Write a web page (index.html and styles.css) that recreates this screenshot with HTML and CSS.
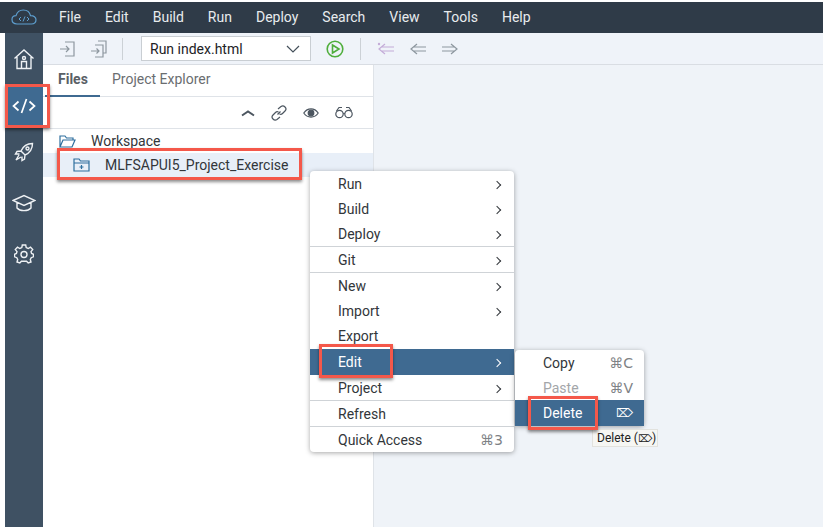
FILE: index.html
```html
<!DOCTYPE html>
<html>

<head>
  <meta charset="utf-8">
  <title>SAP Web IDE</title>
  <link rel="stylesheet" href="styles.css">
</head>

<body>
  <header class="topbar">
    <svg class="logo" width="26" height="16" viewBox="0 0 26 16">
      <path d="M6 15C2.800 15 1 13 1 10.600 1 8.300 2.800 6.700 5 6.700 6 3.200 9 1 12.300 1 16 1 18.800 3.500 19.500 6.600 22.800 6.500 25 8.300 25 10.800 25 13.400 23 15 20.300 15Z" />
      <path class="thin" d="M10 8L8 10L10 12M16 8L18 10L16 12M14 7.500L12 12.500" />
    </svg>
    <nav class="menubar">
      <span>File</span>
      <span>Edit</span>
      <span>Build</span>
      <span>Run</span>
      <span>Deploy</span>
      <span>Search</span>
      <span>View</span>
      <span>Tools</span>
      <span>Help</span>
    </nav>
  </header>

  <div class="workbench">
    <aside class="sidebar">
      <div class="side-item home">
        <svg width="22" height="22" viewBox="0 0 22 22">
          <path d="M1.500 10.500L11 2L20.500 10.500M4 9V20.500H18V9M8.500 20.500V13.500H13.500V20.500" />
          <circle cx="11" cy="10" r="1.500" />
        </svg>
      </div>
      <div class="side-item code">
        <svg width="24" height="16" viewBox="0 0 24 16">
          <path d="M6.500 3.500L1.500 8L6.500 12.500M17.500 3.500L22.500 8L17.500 12.500M14.500 1L9.500 15" />
        </svg>
      </div>
      <div class="side-item rocket">
        <svg width="20" height="20" viewBox="0 0 20 20">
          <path d="M7 9C9 4.500 13 1.500 18.500 1.500 18.500 7 15.500 11 11 13L7 9ZM7 9L3 9.500 1.500 12 5.500 12M11 13L10.500 17 8 18.500 8 14.500M5 13L2 18 7 15" />
          <circle cx="13.500" cy="6.500" r="1.500" />
        </svg>
      </div>
      <div class="side-item grad">
        <svg width="24" height="18" viewBox="0 0 24 18">
          <path d="M1 6.500L12 1.500L23 6.500L12 11.500ZM5 8.500V14C8 17.500 16 17.500 19 14V8.500" />
        </svg>
      </div>
      <div class="side-item gear">
        <svg width="20" height="20" viewBox="0 0 20 20">
          <path d="M8.300 1H11.700L12.200 3.600 14.200 4.500 16.500 3.100 18.700 5.600 17 7.600 17.600 9.500 19.500 10.400V12.800L17.200 13.700 16.300 15.500 17 18 14.200 19 12.600 17.200H7.400L5.800 19 3 18 3.700 15.500 2.800 13.700 0.500 12.800V10.400L2.400 9.500 3 7.600 1.300 5.600 3.500 3.100 5.800 4.500 7.800 3.600Z" />
          <circle cx="10" cy="10.500" r="3" />
        </svg>
      </div>
    </aside>

    <div class="content">
      <div class="toolbar">
        <svg class="tool first" width="18" height="18" viewBox="0 0 18 18">
          <path d="M6 2H15V16H6M1 9H10M7 6L10 9L7 12" />
        </svg>
        <svg class="tool" width="18" height="18" viewBox="0 0 18 18">
          <path d="M8 1H16V13H13M5 5H13V17H5M1 11H9M6.500 8.500L9 11L6.500 13.500" />
        </svg>
        <i class="tool-sep"></i>
        <div class="run-select">
          <span>Run index.html</span>
          <svg width="14" height="8" viewBox="0 0 14 8">
            <path d="M1 1L7 7L13 1" />
          </svg>
        </div>
        <svg class="play" width="18" height="18" viewBox="0 0 18 18">
          <circle cx="9" cy="9" r="7.800" />
          <path d="M6.500 5L13 9L6.500 13Z" />
        </svg>
        <i class="tool-sep second"></i>
        <svg class="tool nav purple" width="18" height="14" viewBox="0 0 18 14">
          <path d="M8 2L2 7L8 12M5 5H17M5 9H17" />
          <circle cx="2" cy="2" r="1.200" />
        </svg>
        <svg class="tool nav" width="18" height="14" viewBox="0 0 18 14">
          <path d="M8 2L2 7L8 12M5 5H17M5 9H17" />
        </svg>
        <svg class="tool nav" width="18" height="14" viewBox="0 0 18 14">
          <path d="M10 2L16 7L10 12M13 5H1M13 9H1" />
        </svg>
      </div>

      <div class="panes">
        <section class="files">
          <div class="tabs">
            <span class="tab active">Files</span>
            <span class="tab second">Project Explorer</span>
          </div>
          <div class="tree-tools">
            <svg width="14" height="8" viewBox="0 0 14 8">
              <path class="heavy" d="M1 6.500L7 2.500L13 6.500" />
            </svg>
            <svg width="16" height="16" viewBox="0 0 16 16">
              <path d="M6.500 9.500L9.500 6.500M7 4L10 1.500C11.500 0.500 13 1 14 2S15.500 4.500 14 6L11.500 8.500C10.500 9.500 9.500 9.500 8.500 9M9 12L6 14.500C4.500 15.500 3 15 2 14S0.500 11.500 2 10L4.500 7.500C5.500 6.500 6.500 6.500 7.500 7" />
            </svg>
            <svg width="16" height="12" viewBox="0 0 16 12">
              <path d="M0.800 6C4.500 0.500 11.500 0.500 15.200 6 11.500 11.500 4.500 11.500 0.800 6Z" />
              <circle class="solid" cx="8" cy="6" r="2.800" />
            </svg>
            <svg width="18" height="13" viewBox="0 0 18 13">
              <circle cx="4.500" cy="8" r="3.700" />
              <circle cx="13.500" cy="8" r="3.700" />
              <path d="M8.200 7.500H9.800M1.500 5L4 1.500H7M16.500 5L14 1.500H11" />
            </svg>
          </div>
          <div class="tree">
            <div class="tree-row root">
              <svg width="17" height="13" viewBox="0 0 17 13">
                <path d="M1 12V1H6L7.500 3H14V5M1 12H13L16 5H4L1 12Z" />
              </svg>
              <span>Workspace</span>
            </div>
            <div class="tree-row project">
              <svg width="17" height="14" viewBox="0 0 17 14">
                <path d="M1 13V1H6L7.500 3H16V13ZM1 5H16M8.500 7V11M6.500 9H10.500" />
              </svg>
              <span>MLFSAPUI5_Project_Exercise</span>
            </div>
          </div>
        </section>
        <section class="editor"></section>
      </div>
    </div>
  </div>

  <ul class="menu context">
    <li>Run<b></b></li>
    <li>Build<b></b></li>
    <li class="last">Deploy<b></b></li>
    <li class="last">Git<b></b></li>
    <li>New<b></b></li>
    <li>Import<b></b></li>
    <li class="tall">Export</li>
    <li class="selected tall">Edit<b></b></li>
    <li class="last">Project<b></b></li>
    <li class="last">Refresh</li>
    <li>Quick Access<kbd>⌘3</kbd></li>
  </ul>

  <ul class="menu submenu">
    <li>Copy<kbd>⌘C</kbd></li>
    <li class="disabled">Paste<kbd>⌘V</kbd></li>
    <li class="selected">Delete<kbd class="del">⌦</kbd></li>
  </ul>

  <div class="tooltip">Delete (<span class="del">⌦</span>)</div>

  <i class="callout box-code"></i>
  <i class="callout box-project"></i>
  <i class="callout box-edit"></i>
  <i class="callout box-delete"></i>
</body>

</html>
```

FILE: styles.css
```css
* {
  box-sizing: border-box;
}

body {
  margin: 0;
  width: 823px;
  height: 527px;
  padding: 2px 0 0 5px;
  overflow: hidden;
  background-color: #fff;
  font-family: Roboto, "DejaVu Sans", sans-serif;
  font-size: 14px;
  color: #32363a;
}

svg {
  display: block;
  flex: none;
  fill: none;
  stroke: currentColor;
  stroke-width: 1.2;
}

.topbar {
  display: flex;
  align-items: center;
  height: 31px;
  margin-left: -5px;
  padding-left: 11px;
  padding-bottom: 1px;
  background-color: #2f3b48;
  color: #e8ebee;
}

.logo {
  color: #5e9fcf;
  margin-right: 22px;
}

.logo .thin {
  stroke-width: 1;
}

.menubar {
  display: flex;
  gap: 24px;
}

.workbench {
  display: flex;
  height: 494px;
}

.sidebar {
  display: flex;
  flex-direction: column;
  width: 38px;
  background-color: #3f5163;
  color: #eef1f4;
}

.sidebar svg {
  stroke-width: 1.400;
}

.side-item {
  display: flex;
  align-items: center;
  justify-content: center;
}

.side-item.home {
  height: 50px;
  margin-bottom: 2px;
  padding-top: 1px;
}

.side-item.code {
  height: 42px;
  background-color: #3f6a91;
  color: #fff;
}

.side-item.code svg {
  stroke-width: 1.700;
}

.side-item.rocket {
  height: 50px;
}

.side-item.grad {
  height: 52px;
}

.side-item.gear {
  height: 50px;
}

.content {
  display: flex;
  flex-direction: column;
  flex: 1;
}

.toolbar {
  display: flex;
  align-items: center;
  height: 32px;
  background-color: #eff3f9;
  border-bottom: 1px solid #d9dde3;
  color: #8d979f;
}

.tool.first {
  margin-left: 16px;
}

.tool {
  margin-right: 13px;
}

.tool-sep {
  width: 1px;
  height: 22px;
  margin: 0 18px 0 1px;
  background-color: #ccd1d6;
}

.tool-sep.second {
  margin: 0 16px 0 16px;
}

.run-select {
  display: flex;
  align-items: center;
  justify-content: space-between;
  width: 170px;
  height: 25px;
  margin-right: 15px;
  padding: 0 10px 0 8px;
  background-color: #fff;
  border: 1px solid #c9ced3;
  color: #1d2226;
}

.run-select svg {
  color: #44505a;
}

.play {
  color: #4fae3c;
  stroke-width: 1.600;
}

.tool.nav {
  margin-right: 14px;
}

.tool.nav.purple {
  color: #c4acd8;
}

.tool.nav.purple circle {
  fill: currentColor;
  stroke: none;
}

.panes {
  display: flex;
  flex: 1;
}

.files {
  width: 331px;
  border-right: 1px solid #dfe3e8;
  background-color: #fff;
}

.tabs {
  display: flex;
  height: 32px;
  padding-left: 2px;
  border-bottom: 1px solid #dfe3e8;
  color: #6a6d70;
}

.tab {
  padding: 5px 13px 0;
  line-height: 19px;
  margin-bottom: -1px;
}

.tab.second {
  margin-left: -1px;
}

.tab.active {
  width: 55px;
  font-weight: 700;
  color: #5a6066;
  border-bottom: 2px solid #3f6a91;
}

.tree-tools {
  display: flex;
  align-items: center;
  justify-content: flex-end;
  gap: 16px;
  height: 32px;
  padding-right: 20px;
  border-bottom: 1px solid #dfe3e8;
  color: #4c5660;
}

.heavy {
  stroke-width: 2;
}

.solid {
  fill: currentColor;
}

.tree {
  padding-top: 2px;
}

.tree-row {
  display: flex;
  align-items: center;
  color: #32363a;
}

.tree-row svg {
  color: #2e6f9e;
}

.tree-row.root {
  height: 20px;
  margin-bottom: 2px;
  padding-left: 16px;
  gap: 15px;
}

.tree-row.project {
  height: 24px;
  padding-left: 30px;
  gap: 15px;
  background-color: #e8eff8;
}

.editor {
  flex: 1;
  background-color: #eff3f8;
}

.menu {
  position: absolute;
  margin: 0;
  padding: 0;
  list-style: none;
  background-color: #fff;
  border-radius: 4px;
  box-shadow: 0 1px 5px rgba(0, 0, 0, 0.35);
}

.menu li {
  display: flex;
  align-items: center;
  justify-content: space-between;
  height: 25px;
  padding: 0 11px 0 28px;
}

.menu li.last {
  height: 26px;
  border-bottom: 1px solid #cfd3d7;
}

.menu li.tall {
  height: 26px;
}

.menu li.selected {
  background-color: #3f6a91;
  color: #fff;
}

.menu li.disabled {
  color: #a3a6a9;
}

.menu b {
  width: 6px;
  height: 6px;
  margin: 2px 3px 0 0;
  border-top: 1px solid currentColor;
  border-right: 1px solid currentColor;
  transform: rotate(45deg);
}

kbd {
  font-family: "DejaVu Sans", sans-serif;
  font-size: 14px;
  color: #7e8286;
}

.selected kbd {
  color: #fff;
}

kbd.del {
  font-size: 12px;
}

.context {
  left: 310px;
  top: 171px;
  width: 204px;
}

.submenu {
  left: 515px;
  top: 350px;
  width: 129px;
}

.submenu li.selected {
  height: 26px;
}

.tooltip {
  position: absolute;
  left: 592px;
  top: 429px;
  width: 66px;
  height: 18px;
  padding-left: 4px;
  background-color: #f6f6f3;
  border: 1px solid #e2e2de;
  font-size: 12px;
  line-height: 16px;
  color: #222;
  white-space: nowrap;
}

.tooltip .del {
  font-size: 10px;
}

.callout {
  position: absolute;
  border: 3px solid #f4584a;
  box-shadow: 0 2px 3px rgba(0, 0, 0, 0.45);
}

.box-code {
  left: 5px;
  top: 84px;
  width: 45px;
  height: 44px;
}

.box-project {
  left: 57px;
  top: 148px;
  width: 245px;
  height: 32px;
}

.box-edit {
  left: 319px;
  top: 344px;
  width: 74px;
  height: 34px;
}

.box-delete {
  left: 528px;
  top: 396px;
  width: 70px;
  height: 34px;
}
```
